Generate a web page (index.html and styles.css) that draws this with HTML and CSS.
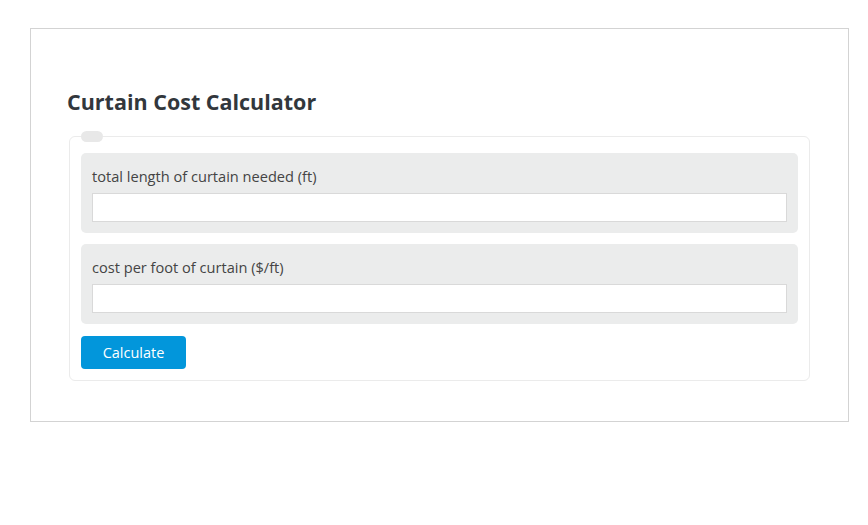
FILE: index.html
```html
<!DOCTYPE html>
<html lang="en">
<head>
    <meta charset="UTF-8">
    <meta name="viewport" content="width=device-width, initial-scale=1.0">
    <title>Curtain Cost Calculator</title>
    <link rel="stylesheet" href="styles.css">
</head>
<body>
    <div class="container">
        <h1>Curtain Cost Calculator</h1>
        <form action="" id="calc">
            <fieldset>
                <legend></legend>
                <div class="input-control">
                    <label for="length">total length of curtain needed (ft)</label>
                    <input type="text" id="length">
                </div>
                <div class="input-control">
                    <label for="cost">cost per foot of curtain ($/ft)</label>
                    <input type="text" id="cost">
                </div>
                <button type="button">Calculate</button>
            </fieldset>
        </form>
    </div>
</body>
</html>
```

FILE: styles.css
```css
body {
    margin: 0;
    background: #fff;
    font-family: 'Open Sans', sans-serif;
}
.container {
    box-sizing: border-box;
    width: 819px;
    height: 394px;
    margin: 28px 0 0 30px;
    padding: 58px 38px 0 38px;
    border: 1px solid #d3d3d3;
}
.container h1 {
    margin: 0 0 14px -2px;
    font-size: 21.5px;
    line-height: 30px;
    font-weight: 700;
    color: #32373c;
}
fieldset {
    margin: 0;
    padding: 0 11px 11px 11px;
    border: 1px solid #ebebeb;
    border-radius: 6px;
}
legend {
    width: 22px;
    height: 11px;
    padding: 0;
    margin-left: 0;
    background: #e8e8e8;
    border-radius: 6px;
}
.input-control {
    display: flex;
    flex-direction: column;
    margin-top: 11px;
    padding: 14px 11px 11px 11px;
    background: #ebecec;
    border-radius: 5px;
}
.input-control label {
    font-size: 14.6px;
    line-height: 19px;
    color: #444;
    margin-bottom: 7px;
}
.input-control input {
    box-sizing: border-box;
    height: 29px;
    margin: 0;
    padding: 4px 8px;
    border: 1px solid #d9d9d9;
    background: #fff;
    font-size: 14px;
    font-family: inherit;
}
.input-control input:focus {
    outline: 0;
}
fieldset button {
    margin-top: 12px;
    width: 105px;
    height: 33px;
    padding: 0;
    color: #fff;
    background: #0296db;
    border: none;
    border-radius: 4px;
    font-family: inherit;
    font-size: 14.5px;
    cursor: pointer;
}
```
